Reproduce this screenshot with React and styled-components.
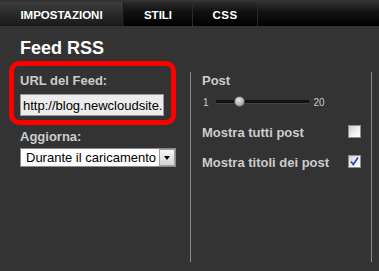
import React from 'react';
import styled, { createGlobalStyle } from 'styled-components';

const Global = createGlobalStyle`
  html, body { margin: 0; padding: 0; background: #333333; }
  body { font-family: "Liberation Sans", Arial, sans-serif; overflow: hidden; }
`;

const Page = styled.div`
  width: 379px;
  height: 271px;
  background: #333333;
  padding-top: 2px;
  box-sizing: border-box;
`;

const TabBar = styled.div`
  display: flex;
  height: 24px;
  background: linear-gradient(#2f2f2f 0%, #141414 40%, #000 100%);
`;

const Tab = styled.div`
  width: ${p => p.$w}px;
  box-sizing: border-box;
  height: 24px;
  padding-top: 3px;
  line-height: 21px;
  text-align: center;
  font-size: 11.5px;
  font-weight: bold;
  color: #fff;
  letter-spacing: ${p => p.$ls || 0}px;
  border-right: 1px solid ${p => (p.$active ? '#161616' : '#2a2a2a')};
  background: ${p =>
    p.$active
      ? 'linear-gradient(#3e3e3e 0%, #2a2a2a 50%, #1d1d1d 90%, #151515 100%)'
      : 'linear-gradient(#2c2c2c 0%, #111 40%, #000 100%)'};
`;

const Title = styled.h1`
  margin: 11px 0 0 20px;
  font-size: 18px;
  line-height: 22px;
  font-weight: bold;
  color: #ffffff;
`;

const Columns = styled.div`
  display: flex;
  align-items: flex-start;
  margin-top: 2px;
`;

const LeftCol = styled.div`
  margin-left: 9px;
  width: 181px;
  display: flex;
  flex-direction: column;
`;

const Highlight = styled.div`
  width: 167px;
  box-sizing: border-box;
  border: 5px solid #ff0000;
  border-radius: 10px;
  padding: 7px 0 4px 6px;
  display: flex;
  flex-direction: column;
`;

const Label = styled.div`
  font-size: 13px;
  line-height: 16px;
  font-weight: bold;
  color: #cccccc;
  margin-left: ${p => p.$ml || 0}px;
  margin-top: ${p => p.$mt || 0}px;
`;

const TextInput = styled.input`
  margin-top: 5px;
  width: 144px;
  height: 22px;
  box-sizing: border-box;
  border: 1px solid #999;
  background: #ececec;
  padding: 0 0 0 2px;
  font-family: "Liberation Sans", Arial, sans-serif;
  font-size: 13px;
  color: #000;
  outline: none;
`;

const SelectBox = styled.div`
  margin: 3px 0 0 11px;
  width: 156px;
  height: 19px;
  box-sizing: border-box;
  border: 1px solid #8a8a8a;
  background: #fff;
  display: flex;
  align-items: center;
  justify-content: space-between;
  font-size: 13px;
  color: #000;
`;

const SelectText = styled.span`
  padding-left: 5px;
  white-space: nowrap;
`;

const ArrowButton = styled.span`
  width: 16px;
  height: 17px;
  box-sizing: border-box;
  border: 1px solid #a0a0a0;
  background: linear-gradient(#f6f6f6, #d6d6d6);
  display: flex;
  align-items: center;
  justify-content: center;
  &::after {
    content: '';
    border-top: 4px solid #000;
    border-left: 3.5px solid transparent;
    border-right: 3.5px solid transparent;
  }
`;

const RightCol = styled.div`
  margin-top: 11px;
  width: 182px;
  height: 190px;
  box-sizing: border-box;
  border-left: 1px solid #8a8a8a;
  border-right: 1px solid #8a8a8a;
  padding: 1px 10px 0 11px;
  display: flex;
  flex-direction: column;
`;

const SliderRow = styled.div`
  margin-top: 6px;
  height: 14px;
  display: flex;
  align-items: center;
  font-size: 10px;
  color: #cccccc;
`;

const SliderValue = styled.span`
  margin-left: ${p => p.$ml || 0}px;
`;

const Track = styled.div`
  position: relative;
  margin-left: 7px;
  width: 93px;
  height: 3px;
  background: #111;
  border-bottom: 1px solid #444;
`;

const Thumb = styled.div`
  position: absolute;
  top: -4px;
  width: 11px;
  height: 11px;
  border-radius: 50%;
  box-sizing: border-box;
  border: 1px solid #555;
  background: radial-gradient(circle at 40% 35%, #e6e6e6 0%, #b4b4b4 55%, #8a8a8a 100%);
`;

const CheckRow = styled.div`
  margin-top: ${p => p.$mt}px;
  display: flex;
  justify-content: space-between;
  align-items: flex-start;
  font-size: 13px;
  line-height: 16px;
  font-weight: bold;
  color: #cccccc;
`;

const CheckBox = styled.span`
  width: 13px;
  height: 13px;
  box-sizing: border-box;
  border: 1px solid #8e8e8e;
  background: linear-gradient(135deg, #cfcfcf 0%, #f2f2f2 60%, #ffffff 100%);
  display: flex;
`;

function Check({ checked }) {
  return (
    <CheckBox>
      {checked && (
        <svg width="11" height="11" viewBox="0 0 11 11">
          <path d="M2 5.5 L4.3 8.5 L9 1.5" fill="none" stroke="#2c46a8" strokeWidth="1.7" />
        </svg>
      )}
    </CheckBox>
  );
}

export default function App() {
  return (
    <Page>
      <Global />
      <TabBar>
        <Tab $w={124} $active>IMPOSTAZIONI</Tab>
        <Tab $w={69}>STILI</Tab>
        <Tab $w={65} $ls={0.5}>CSS</Tab>
      </TabBar>
      <Title>Feed RSS</Title>
      <Columns>
        <LeftCol>
          <Highlight>
            <Label>URL del Feed:</Label>
            <TextInput readOnly value="http://blog.newcloudsite." />
          </Highlight>
          <Label $ml={11} $mt={4}>Aggiorna:</Label>
          <SelectBox>
            <SelectText>Durante il caricamento</SelectText>
            <ArrowButton />
          </SelectBox>
        </LeftCol>
        <RightCol>
          <Label>Post</Label>
          <SliderRow>
            <SliderValue $ml={1}>1</SliderValue>
            <Track>
              <Thumb style={{ left: 18 }} />
            </Track>
            <SliderValue $ml={5}>20</SliderValue>
          </SliderRow>
          <CheckRow $mt={16}>
            <span>Mostra tutti post</span>
            <Check />
          </CheckRow>
          <CheckRow $mt={14}>
            <span>Mostra titoli dei post</span>
            <Check checked />
          </CheckRow>
        </RightCol>
      </Columns>
    </Page>
  );
}
